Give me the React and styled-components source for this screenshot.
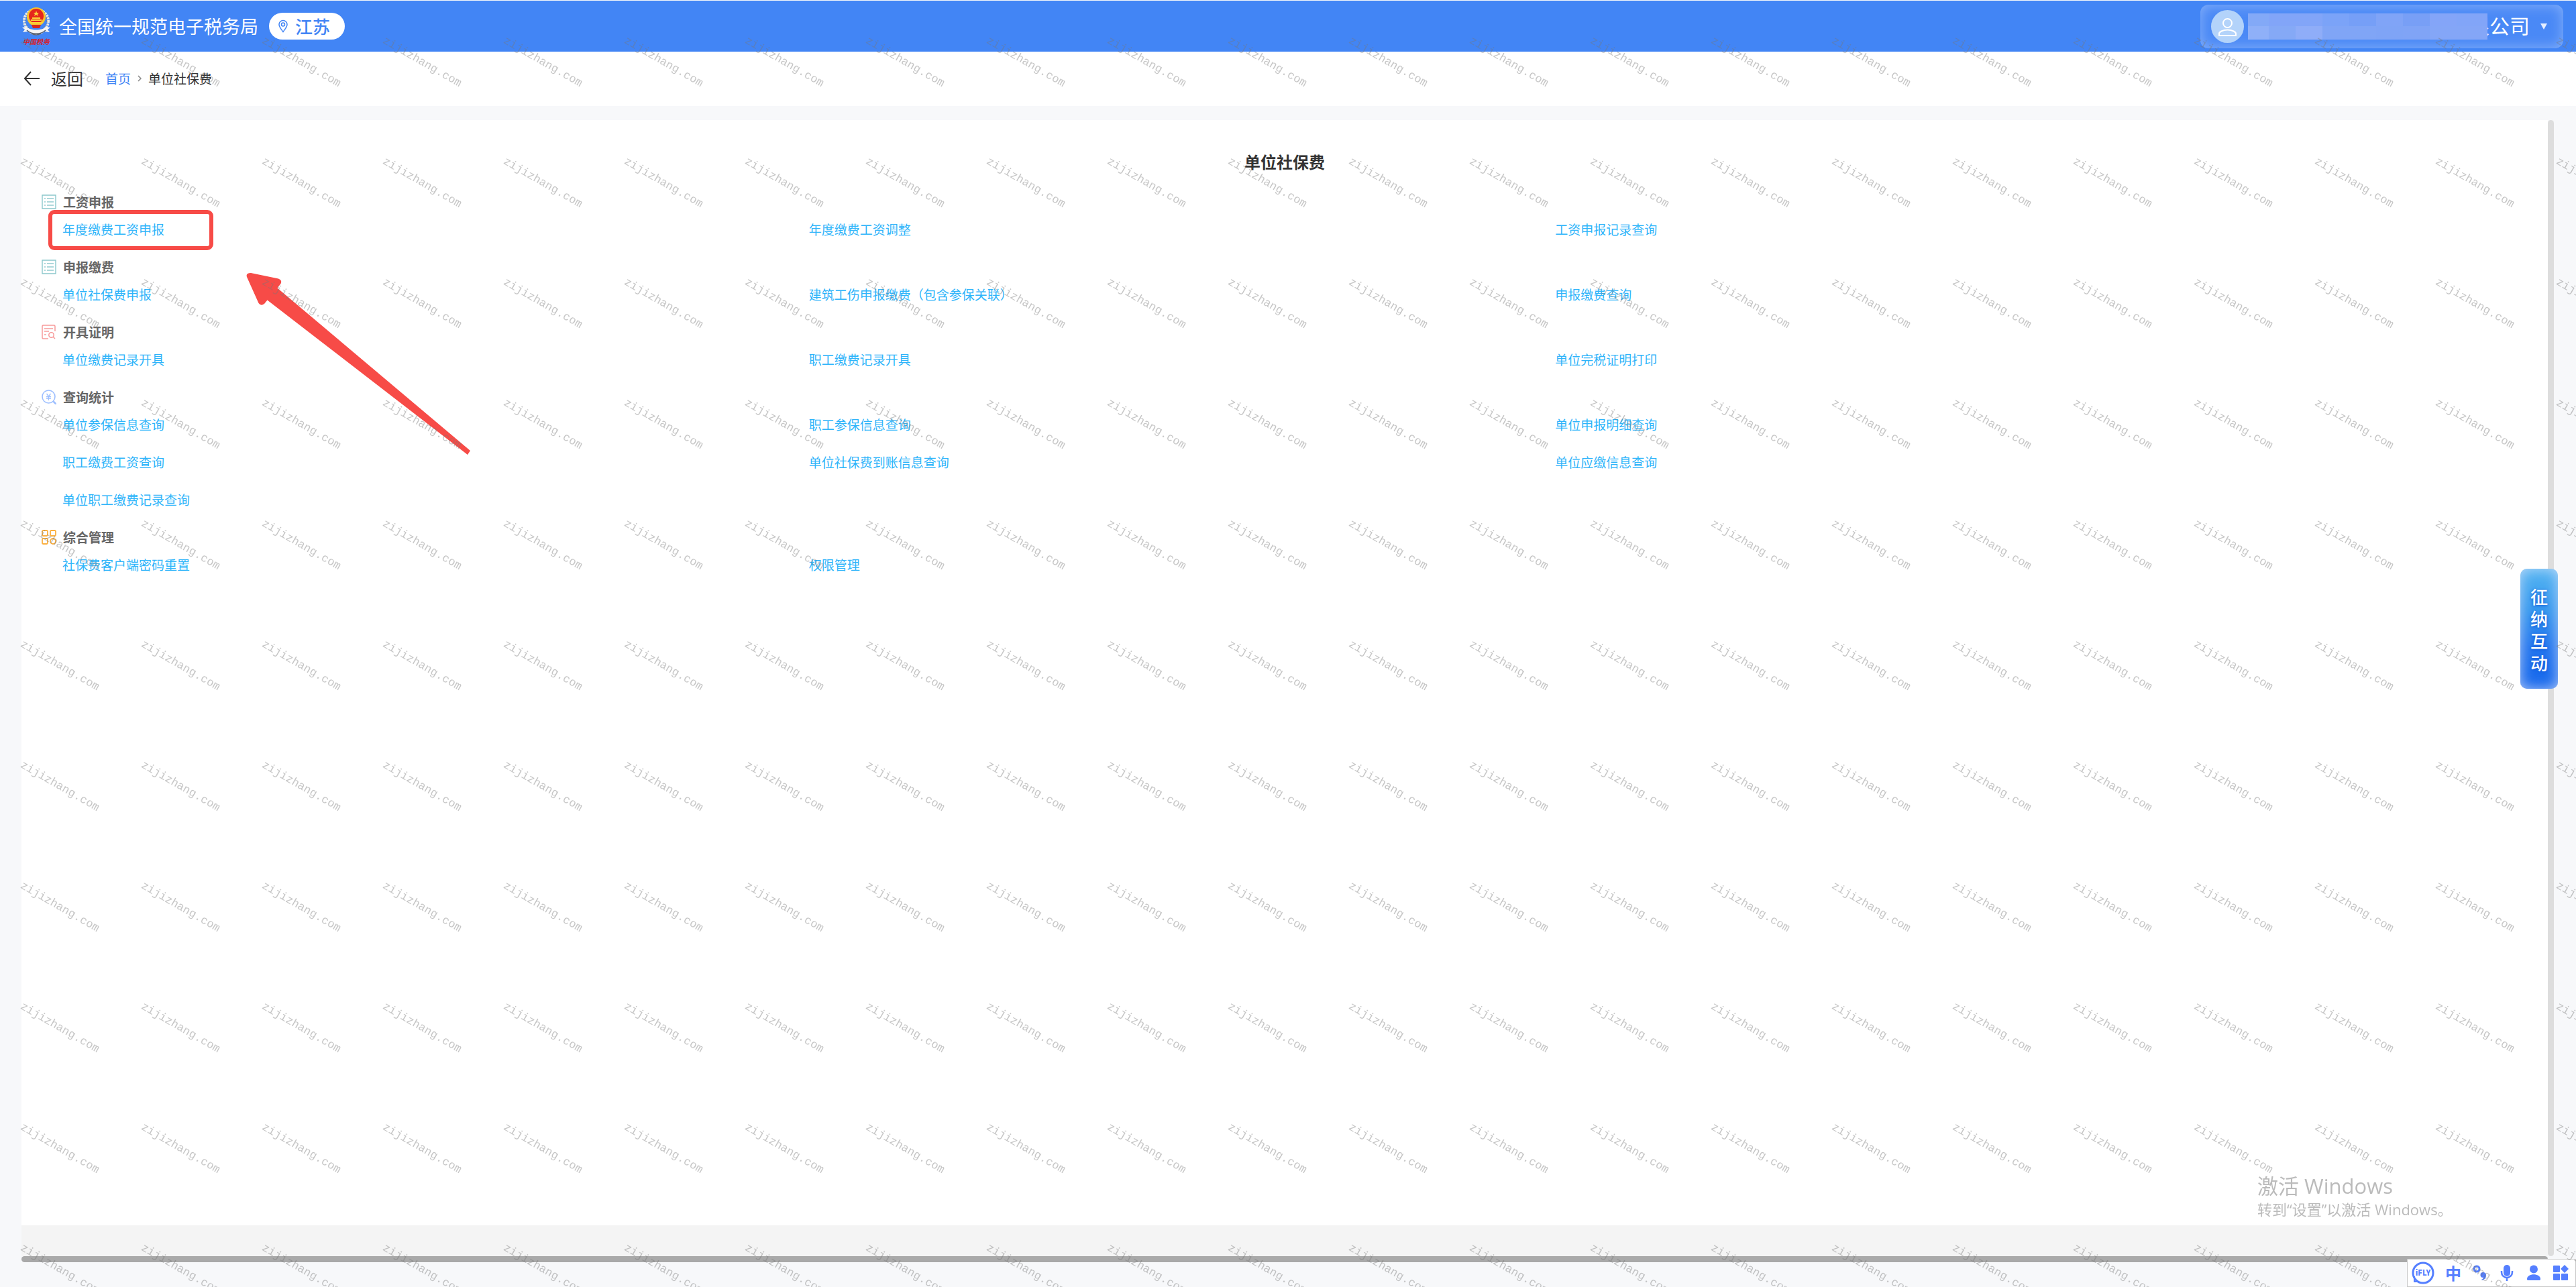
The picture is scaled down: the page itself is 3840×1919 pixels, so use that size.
import React from "react"
import styled, { createGlobalStyle } from "styled-components"

const sections = [
  {
    title: "工资申报",
    icon: "list",
    links: ["年度缴费工资申报", "年度缴费工资调整", "工资申报记录查询"],
    marked: true,
  },
  {
    title: "申报缴费",
    icon: "list",
    links: ["单位社保费申报", "建筑工伤申报缴费（包含参保关联）", "申报缴费查询"],
  },
  {
    title: "开具证明",
    icon: "cert",
    links: ["单位缴费记录开具", "职工缴费记录开具", "单位完税证明打印"],
  },
  {
    title: "查询统计",
    icon: "search",
    links: [
      "单位参保信息查询",
      "职工参保信息查询",
      "单位申报明细查询",
      "职工缴费工资查询",
      "单位社保费到账信息查询",
      "单位应缴信息查询",
      "单位职工缴费记录查询",
    ],
  },
  {
    title: "综合管理",
    icon: "grid",
    links: ["社保费客户端密码重置", "权限管理"],
  },
]

const mosaic = [
  "#83a9f7", "#82a5f8", "#82a5f8", "#7ba3f8", "#769ff7", "#80a4f7", "#789ff6", "#84a5f8", "#82a5f8",
  "#8fb0f8", "#85a9f6", "#8fadf8", "#80a5f6", "#80a5f6", "#7fa4f6", "#80a4f6", "#84a6f7", "#84a6f7",
]

const sectionIcons = {
  list: (
    <g fill="none" stroke="#8cc8cc">
      <path d="M1 1h20v20H1z" strokeWidth="1.4" />
      <path d="M4 6h2M4 11h2M4 16h2M8 6h10M8 11h10M8 16h10" strokeWidth="2" opacity=".7" />
    </g>
  ),
  cert: (
    <g fill="none" stroke="#f79a9a" strokeWidth="1.5">
      <path d="M10 21H2.500a1.500 1.500 0 0 1-1.500-1.500v-17A1.500 1.500 0 0 1 2.500 1h16A1.500 1.500 0 0 1 20 2.500V10" />
      <path d="M4 6h13M4 10h7M4 15h3" />
      <circle cx="14.500" cy="15.500" r="3.700" />
      <path d="m17 18 3 3" />
    </g>
  ),
  search: (
    <g fill="none" stroke="#9dbfff" strokeWidth="1.600">
      <circle cx="10.500" cy="10.500" r="9.500" />
      <path d="m17 17 5 5" strokeWidth="2.600" />
      <path d="m7.500 6 3 4 3-4M7 10.500h7M7 13h7M10.500 10v6" strokeWidth="1.300" />
    </g>
  ),
  grid: (
    <g fill="none" stroke="#fbb040" strokeWidth="1.800">
      <rect x="1" y="1" width="8" height="8" rx="1.500" />
      <rect x="13" y="1" width="8" height="8" rx="1.500" />
      <rect x="1" y="13" width="8" height="8" rx="1.500" />
      <circle cx="17" cy="17" r="4" />
    </g>
  ),
}

const TaxLogo = () => (
  <Logo viewBox="0 0 44 60" role="img" aria-label="中国税务">
    <ellipse cx="22" cy="22" rx="18" ry="17" fill="none" stroke="#e9e9e4" strokeWidth="4" strokeDasharray="3 1" />
    <ellipse cx="22" cy="22" rx="16" ry="15" fill="none" stroke="#707985" strokeWidth="1" strokeDasharray="2 2" />
    <circle cx="22" cy="16" r="14" fill="#f8c22b" />
    <circle cx="22" cy="15" r="11" fill="#e5261c" />
    <path d="m22 7 1 3h3l-2 2 1 3-3-2-3 2 1-3-2-2h3z" fill="#fbd43a" />
    <path d="M14 21h16M16 18h12M12 25h20" stroke="#fbd43a" strokeWidth="2" />
    <path d="M15 28h14l-2 5H17z" fill="#d7271d" />
    <path d="M1 32l7-1c4 6 24 6 28 0l7 1-4 3 3 4-8-1c-6 7-18 7-24 0l-8 1 3-4z" fill="#f4f4f4" />
    <path d="M8 36c7 7 21 7 28 0M15 41q7 4 14 0" fill="none" stroke="#596273" strokeWidth="1.500" />
    <text x="22" y="57" textAnchor="middle" fontSize="10" fontStyle="italic" fontWeight="700" fill="#d5222c">
      中国税务
    </text>
  </Logo>
)

const Watermark = () => (
  <Marks aria-hidden="true">
    {Array.from({ length: 242 }, (_, i) => (
      <span key={i}>zijizhang.com</span>
    ))}
  </Marks>
)

const Section = ({ title, icon, links, marked }) => (
  <Group>
    <GroupTitle>
      <svg viewBox="0 0 22 22">{sectionIcons[icon]}</svg>
      {title}
    </GroupTitle>
    <Links>
      {links.map((label, i) => (
        <li key={label}>
          <a href="#">{label}</a>
          {marked && i === 0 && <RedBox />}
        </li>
      ))}
    </Links>
  </Group>
)

const InputBar = () => (
  <Ime>
    <button aria-label="讯飞输入法">
      <svg width="34" height="34" viewBox="0 0 34 34">
        <circle cx="17" cy="17" r="15" fill="none" stroke="#557fff" strokeWidth="3" />
        <path d="M4 22v8h7" fill="none" stroke="#557fff" strokeWidth="2" />
        <text x="17" y="21" textAnchor="middle" fontSize="11" fontWeight="900" fill="#557fff">iFLY</text>
      </svg>
    </button>
    <button>中</button>
    <button aria-label="标点">
      <svg width="24" height="26" viewBox="0 0 24 26">
        <circle cx="7" cy="7" r="4" fill="none" stroke="#557fff" strokeWidth="3" />
        <path d="M16 12a4.500 4.500 0 0 1 5 5c0 4-3 6-6 7l-1-1c2-1 3-2 3-3a4 4 0 0 1-1-8z" fill="#557fff" />
      </svg>
    </button>
    <button aria-label="语音">
      <svg width="24" height="26" viewBox="0 0 24 26">
        <rect x="7" y="1" width="10" height="17" rx="5" fill="#557fff" />
        <path d="M4 10v2a8 8 0 0 0 16 0v-2M12 20v5" fill="none" stroke="#557fff" strokeWidth="2.500" />
      </svg>
    </button>
    <button aria-label="用户">
      <svg width="24" height="26" viewBox="0 0 24 26" fill="#557fff">
        <circle cx="12" cy="7.500" r="6" />
        <path d="M2 22c0-9 20-9 20 0 0 2-1 2-2 2H4c-1 0-2 0-2-2z" />
      </svg>
    </button>
    <button aria-label="工具箱">
      <svg width="24" height="26" viewBox="0 0 24 26" fill="#557fff">
        <rect x="1" y="2" width="10" height="10" rx="1" />
        <rect x="1" y="14" width="10" height="10" rx="1" />
        <rect x="13" y="14" width="10" height="10" rx="1" />
        <path d="m18 1 6 6-6 6-6-6z" />
      </svg>
    </button>
  </Ime>
)

const App = () => {
  return (
    <Page>
      <GlobalStyle />
      <Header>
        <TaxLogo />
        <SiteName>全国统一规范电子税务局</SiteName>
        <Region>
          <svg width="14" height="20" viewBox="0 0 14 20" fill="none" stroke="#4285f5" strokeWidth="1.500">
            <path d="M7 18.500C4 14.500 1 11 1 7.500a6 6 0 0 1 12 0c0 3.500-3 7-6 11z" />
            <circle cx="7" cy="7.500" r="2.500" />
          </svg>
          江苏
        </Region>
        <Account>
          <Avatar viewBox="0 0 49 49">
            <circle cx="24.500" cy="24.500" r="24.500" fill="#b3d3fa" />
            <g fill="none" stroke="#fff" strokeWidth="2">
              <circle cx="24.500" cy="19.500" r="6.500" />
              <path d="M12 38v-3c0-2 5-5.500 12.500-5.500S37 33 37 35v3z" />
            </g>
          </Avatar>
          <Mosaic>
            {mosaic.map((color, i) => (
              <Tile key={i} $color={color} />
            ))}
          </Mosaic>
          <span>限公司</span>
          <Caret width="10" height="9" viewBox="0 0 10 9">
            <path d="M0 0h10L5 9z" fill="#e6efff" />
          </Caret>
        </Account>
      </Header>
      <Crumbs>
        <Back>
          <svg width="24" height="22" viewBox="0 0 24 22" fill="none" stroke="#333" strokeWidth="2">
            <path d="M23 11H1M10 1 1 11l9 10" />
          </svg>
          返回
        </Back>
        <a href="#">首页</a>
        <svg width="6" height="10" viewBox="0 0 6 10" fill="none" stroke="#888" strokeWidth="1.500">
          <path d="m1 1 4 4-4 4" />
        </svg>
        <span>单位社保费</span>
      </Crumbs>
      <Main>
        <Panel>
          <h1>单位社保费</h1>
          {sections.map((section) => (
            <Section key={section.title} {...section} />
          ))}
          <Arrow viewBox="0 0 400 320">
            <path
              d="M34 27 75 35.500Q81 38 78.500 43L73.500 49.500 361 292l-4 6L58.500 67.500 54 73q-5 4-8.500-1L28 33q-2-6 6-6z"
              fill="#f74b47"
            />
          </Arrow>
        </Panel>
        <VBar />
        <PanelFoot />
        <HBar />
      </Main>
      <Activate>
        <strong>激活 Windows</strong>
        <span>转到“设置”以激活 Windows。</span>
      </Activate>
      <Interact>
        <span>征</span>
        <span>纳</span>
        <span>互</span>
        <span>动</span>
      </Interact>
      <InputBar />
      <Watermark />
    </Page>
  )
}

const GlobalStyle = createGlobalStyle`
  * {
    box-sizing: border-box;
  }
  body {
    margin: 0;
    background: #f7f8fa;
    color: #333;
    font-family: "Noto Sans CJK SC", sans-serif;
    font-size: 19px;
  }
  a {
    text-decoration: none;
  }
  button {
    border: 0;
    padding: 0;
    background: none;
    font-family: inherit;
    cursor: pointer;
  }
`
const Page = styled.div`
  display: flex;
  flex-direction: column;
  min-height: 100vh;
`
const Header = styled.header`
  display: flex;
  align-items: center;
  height: 76px;
  margin-top: 1px;
  padding: 0 19px 0 32px;
  background: #4285f5;
  color: white;
`
const Logo = styled.svg`
  width: 44px;
  height: 60px;
  margin-right: 12px;
`
const SiteName = styled.div`
  margin-right: 16px;
  font-size: 27px;
  line-height: 40px;
`
const Region = styled.button`
  display: flex;
  align-items: center;
  gap: 11px;
  height: 40px;
  padding: 0 22px 0 14px;
  border-radius: 20px;
  background: white;
  color: #4285f5;
  font-size: 26px;
  font-weight: 500;
  line-height: 38px;
`
const Account = styled.button`
  display: flex;
  align-items: center;
  height: 65px;
  margin-left: auto;
  padding: 0 24px 0 16px;
  border-radius: 12px;
  background: #4a89f6;
  box-shadow: inset 0 0 20px rgba(255, 255, 255, 0.35);
  color: white;
  font-size: 30px;
  line-height: 44px;
  span {
    padding-bottom: 4px;
  }
`
const Avatar = styled.svg`
  width: 49px;
  height: 49px;
  margin-right: 6px;
`
const Mosaic = styled.div`
  display: grid;
  grid-template: 19px 20px / 31px repeat(7, 40px) 46px;
  margin-right: -27px;
  z-index: 1;
`
const Tile = styled.i`
  background: ${(props) => props.$color};
`
const Caret = styled.svg`
  margin-left: 16px;
`
const Crumbs = styled.nav`
  display: flex;
  align-items: center;
  height: 81px;
  padding: 0 36px 2px;
  background: white;
  line-height: 28px;
  a {
    margin-right: 10px;
    color: #4285f5;
  }
  span {
    margin-left: 10px;
  }
`
const Back = styled.button`
  display: flex;
  align-items: center;
  gap: 16px;
  margin-right: 33px;
  color: #333;
  font-size: 24px;
  line-height: 36px;
`
const Main = styled.main`
  flex: 1;
  display: grid;
  grid-template: 1fr 46px 9px / 1fr 9px;
  padding: 21px 33px 37px 32px;
`
const Panel = styled.section`
  position: relative;
  padding: 38px 0 0 30px;
  background: white;
  h1 {
    margin: 0 30px 22px 0;
    font-size: 24px;
    line-height: 48px;
    text-align: center;
  }
`
const VBar = styled.div`
  grid-row: 1 / 3;
  grid-column: 2;
  border-radius: 5px;
  background: #ddd;
`
const PanelFoot = styled.div`
  background: #f4f4f4;
`
const HBar = styled.div`
  grid-row: 3;
  border-radius: 5px;
  background: #a9a9a9;
`
const Group = styled.div`
  margin-bottom: 14px;
`
const GroupTitle = styled.h2`
  display: flex;
  align-items: center;
  gap: 10px;
  margin: 0;
  color: #666;
  font-size: 19px;
  line-height: 27px;
  svg {
    width: 22px;
    height: 22px;
  }
`
const Links = styled.ul`
  display: grid;
  grid-template-columns: repeat(3, 1fr);
  margin: 0;
  padding: 0 367px 0 31px;
  list-style: none;
  li {
    position: relative;
    line-height: 56px;
  }
  a {
    color: #2eb4fa;
  }
`
const RedBox = styled.div`
  position: absolute;
  top: -1px;
  left: -21px;
  width: 246px;
  height: 60px;
  border: 6px solid #f74b47;
  border-radius: 9px;
  pointer-events: none;
`
const Arrow = styled.svg`
  position: absolute;
  top: 201px;
  left: 308px;
  width: 400px;
  height: 320px;
  pointer-events: none;
`
const Activate = styled.div`
  position: fixed;
  right: 187px;
  bottom: 100px;
  display: flex;
  flex-direction: column;
  width: 288px;
  color: #bbb;
  font-family: "Open Sans", "Noto Sans CJK SC", sans-serif;
  strong {
    font-size: 31px;
    font-weight: 400;
    line-height: 38px;
  }
  span {
    font-size: 22px;
    line-height: 32px;
    white-space: nowrap;
  }
`
const Interact = styled.button`
  position: fixed;
  top: 848px;
  right: 27px;
  display: flex;
  flex-direction: column;
  align-items: center;
  justify-content: center;
  width: 56px;
  height: 179px;
  border-radius: 10px;
  background: linear-gradient(#55b5f2, #3597ee 35%, #2476ee 65%, #1466ec);
  box-shadow: inset 0 0 20px rgba(215, 225, 250, 0.8);
  color: white;
  font-size: 26px;
  font-weight: 500;
  line-height: 33px;
  text-shadow: 0 1px 4px #1257d6;
`
const Ime = styled.div`
  position: fixed;
  right: 0;
  bottom: 0;
  display: flex;
  align-items: center;
  gap: 16px;
  height: 42px;
  padding: 0 10px 0 6px;
  border: 1px solid #c8c8c8;
  background: white;
  button {
    display: flex;
    color: #557fff;
    font-size: 24px;
    font-weight: 700;
    line-height: 26px;
  }
`
const Marks = styled.div`
  position: fixed;
  inset: 0;
  display: grid;
  grid-template-columns: repeat(22, 180px);
  grid-auto-rows: 180px;
  padding: 52px 0 0 36px;
  overflow: hidden;
  color: rgba(120, 120, 120, 0.42);
  font-family: "Liberation Mono", monospace;
  font-size: 17px;
  line-height: 17px;
  pointer-events: none;
  z-index: 5;
  span {
    justify-self: start;
    align-self: start;
    transform: rotate(30deg);
    transform-origin: 0 0;
  }
`
export default App
